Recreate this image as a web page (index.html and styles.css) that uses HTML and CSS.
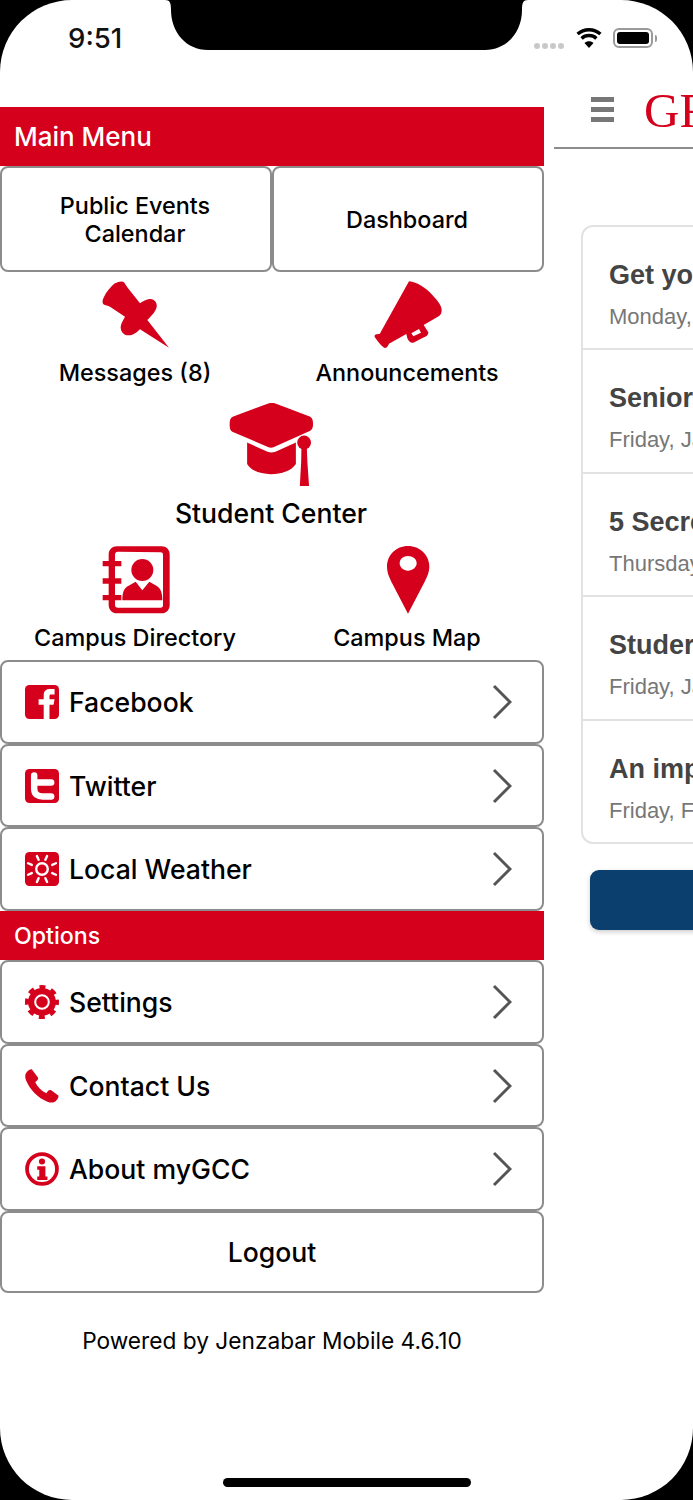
FILE: index.html
```html
<!DOCTYPE html>
<html lang="en">
<head>
<meta charset="utf-8">
<title>myGCC</title>
<link rel="stylesheet" href="styles.css">
</head>
<body>
<div class="screen">
  <div class="app">
    <nav class="menu">
      <h2 class="bar bar-main">Main Menu</h2>
      <div class="btn-row">
        <a class="btn">Public Events<br>Calendar</a>
        <a class="btn">Dashboard</a>
      </div>
      <div class="tiles tiles-first">
        <div class="tile">
          <svg class="ic68" viewBox="126 18 204 204"><path class="r" d="M165 25C175 19 188 17 192 22L203 38L240 85C250 78 262 70 272 72C285 74 292 85 290 95C288 108 275 122 262 135L327 218L240 163C230 172 220 182 205 181C190 180 182 170 182 155C183 145 190 135 195 125L150 95C145 92 135 92 130 88C125 82 128 72 135 60C142 48 155 32 165 25Z"/></svg>
          <span class="tile-label">Messages (8)</span>
        </div>
        <div class="tile">
          <svg class="ic68" viewBox="940 18 204 204"><path class="r" fill-rule="evenodd" d="M1045 19C1070 22 1095 38 1115 60C1132 78 1143 92 1143 106C1143 114 1140 120 1134 124L1089 150L1103 172C1103 180 1098 184 1090 187L1058 203C1050 205 1045 200 1040 190L1037 177L985 206C982 214 977 219 973 219C965 216 950 198 942 186C940 180 945 176 957 177ZM1052 175L1058 184L1081 173L1075 162Z"/></svg>
          <span class="tile-label">Announcements</span>
        </div>
      </div>
      <div class="tile tile-big">
        <svg class="ic84" viewBox="505 385 255 255">
          <path class="r" d="M622 387C630 384 640 384 648 387L748 425C758 430 760 435 760 450C760 460 757 466 750 470L640 519C635 521 630 521 625 519L515 472C508 468 507 462 507 450C507 435 510 430 518 426Z"/>
          <path class="r" d="M560 505L622 533C630 536 638 536 646 533L708 505L708 570C695 590 665 601 632 601C600 601 572 590 560 570Z"/>
          <circle class="r" cx="733" cy="505" r="21"/>
          <path class="r" d="M725 515H741L743 565L748 637H720L724 565Z"/>
        </svg>
        <span class="tile-label-big">Student Center</span>
      </div>
      <div class="tiles tiles-last">
        <div class="tile">
          <svg class="ic68" viewBox="125 33 204 204">
            <path class="r" fill-rule="evenodd" d="M170 34H304C318 34 328 44 328 58V210C328 224 318 235 304 235H170C156 235 145 224 145 210V196H127V180H145V146H127V130H145V94H127V78H145V58C145 44 156 34 170 34ZM173 50C166 50 164 54 164 60V78H183V94H164V130H183V146H164V180H183V196H164V210C164 216 167 218 173 218H300C306 218 308 216 308 210V60C308 54 306 52 300 52Z"/>
            <circle class="r" cx="246" cy="105" r="33"/>
            <path class="r" d="M186 196C186 170 192 158 205 152L226 140L246 166L267 140L288 152C300 158 306 172 306 196Z"/>
          </svg>
          <span class="tile-label">Campus Directory</span>
        </div>
        <div class="tile">
          <svg class="ic68" viewBox="940 33 204 204"><path class="r" fill-rule="evenodd" d="M1042 33C1078 33 1106 60 1106 95C1106 110 1100 124 1092 140L1042 236L992 140C984 124 979 110 979 95C979 60 1006 33 1042 33ZM1042 63C1028 63 1017 72 1017 85C1017 97 1028 107 1042 107C1056 107 1068 97 1068 85C1068 72 1056 63 1042 63Z"/></svg>
          <span class="tile-label">Campus Map</span>
        </div>
      </div>
      <a class="row">
        <svg class="ic34" viewBox="0 0 100 100"><rect class="r" width="100" height="100" rx="13"/><path class="w" d="M55 100V58H40V42H55V30C55 15 65 12 75 12H87V28H77C73 28 72 30 72 33V42H87L84 58H72V100Z"/></svg>
        <span class="row-text">Facebook</span>
        <svg class="chev" viewBox="0 0 20 36"><path d="M2 2L18 18L2 34"/></svg>
      </a>
      <a class="row">
        <svg class="ic34" viewBox="0 0 100 100"><rect class="r" width="100" height="100" rx="13"/><path class="ws" d="M27 19V58C27 75 38 81 52 81H77M27 40H77"/></svg>
        <span class="row-text">Twitter</span>
        <svg class="chev" viewBox="0 0 20 36"><path d="M2 2L18 18L2 34"/></svg>
      </a>
      <a class="row">
        <svg class="ic34" viewBox="0 0 100 100"><rect class="r" width="100" height="100" rx="13"/><circle class="wt" cx="50" cy="50" r="17"/><path class="wr" d="M35 12L40 23M65 12L60 23M9 33L20 38M91 33L80 38M9 67L20 62M91 67L80 62M35 88L40 77M65 88L60 77"/></svg>
        <span class="row-text">Local Weather</span>
        <svg class="chev" viewBox="0 0 20 36"><path d="M2 2L18 18L2 34"/></svg>
      </a>
      <h2 class="bar bar-options">Options</h2>
      <a class="row">
        <svg class="ic34" viewBox="0 0 100 100"><circle class="r" cx="50" cy="50" r="41"/><circle class="teeth" cx="50" cy="50" r="44"/><circle class="ring" cx="50" cy="50" r="20"/></svg>
        <span class="row-text">Settings</span>
        <svg class="chev" viewBox="0 0 20 36"><path d="M2 2L18 18L2 34"/></svg>
      </a>
      <a class="row">
        <svg class="ic34" viewBox="0 0 100 100"><path class="r" d="M20 1L38 25C40 29 38 33 30 38C36 52 48 64 63 71C68 63 71 60 76 62L98 78C100 82 96 90 90 95C84 100 76 100 66 96C38 85 15 62 3 33C-1 22 0 14 6 8C10 4 16 0 20 1Z"/></svg>
        <span class="row-text">Contact Us</span>
        <svg class="chev" viewBox="0 0 20 36"><path d="M2 2L18 18L2 34"/></svg>
      </a>
      <a class="row">
        <svg class="ic34" viewBox="0 0 100 100"><circle class="info" cx="50" cy="50" r="44"/><circle class="r" cx="50" cy="28" r="9"/><path class="r" d="M36 42H60V72H66V82H36V72H42V52H36Z"/></svg>
        <span class="row-text">About myGCC</span>
        <svg class="chev" viewBox="0 0 20 36"><path d="M2 2L18 18L2 34"/></svg>
      </a>
      <a class="row row-center">Logout</a>
      <p class="powered">Powered by Jenzabar Mobile 4.6.10</p>
    </nav>
    <section class="news">
      <header class="news-head">
        <div class="burger"><i></i><i></i><i></i></div>
        <span class="logo">GR</span>
      </header>
      <ul class="card">
        <li class="item"><b>Get yo</b><span>Monday,</span></li>
        <li class="item"><b>Senior</b><span>Friday, Ja</span></li>
        <li class="item"><b>5 Secre</b><span>Thursday</span></li>
        <li class="item"><b>Studer</b><span>Friday, Ja</span></li>
        <li class="item"><b>An imp</b><span>Friday, F</span></li>
      </ul>
      <div class="more"></div>
    </section>
  </div>
  <div class="status">
    <span class="time">9:51</span>
    <svg class="notch" viewBox="0 0 363 51"><path d="M0 0H363C358 0 357 3 357 10C357 32 342 50 320 50H43C21 50 6 32 6 10C6 3 5 0 0 0Z"/></svg>
    <div class="sys">
      <div class="dots"><i></i><i></i><i></i><i></i></div>
      <svg class="wifi" viewBox="0 0 26 20"><path d="M13 20L8.5 15C11 12.8 15 12.8 17.5 15Z"/><path class="wf" d="M5.6 10.4C9.6 6.6 16.4 6.6 20.4 10.4M1.6 6C8 .3 18 .3 24.4 6"/></svg>
      <div class="batt"><i></i></div>
      <div class="nub"></div>
    </div>
  </div>
  <div class="home"></div>
</div>
</body>
</html>
```
FILE: styles.css
```css
* { box-sizing: border-box; }
html, body { margin: 0; padding: 0; background: #000; }
body { width: 693px; height: 1500px; overflow: hidden; font-family: Inter, "Noto Sans", sans-serif; color: #000; }
.screen { position: relative; width: 693px; height: 1500px; background: #fff; border-radius: 72px; overflow: hidden; }
.app { display: flex; gap: 10px; height: 100%; }
.menu { flex: 0 0 544px; padding-top: 107px; display: flex; flex-direction: column; }
.r { fill: #d5001c; }
.w { fill: #fff; }
.bar { flex: none; margin: 0; background: #d5001c; color: #fff; font-weight: 500; display: flex; align-items: center; padding-left: 14px; }
.bar-main { height: 59px; font-size: 26px; }
.bar-options { height: 49px; font-size: 23.2px; }
.btn-row { flex: none; display: flex; height: 106px; }
.btn { flex: 1; border: 2px solid #8c8c8c; border-radius: 8px; display: flex; align-items: center; justify-content: center; text-align: center; font-size: 23.4px; line-height: 28px; font-weight: 500; padding: 2px 2px 0 0; }
.tiles { flex: none; display: flex; }
.tiles-first { margin-top: 9px; }
.tiles-last { margin-top: 15px; }
.tile { flex: 1; display: flex; flex-direction: column; align-items: center; }
.ic68 { width: 68px; height: 68px; display: block; }
.ic84 { width: 84px; height: 84px; display: block; margin-right: 2px; }
.ic34 { width: 34px; height: 34px; flex: none; display: block; overflow: visible; }
.tile-label { margin: 8px 2px 0 0; height: 32px; line-height: 32px; font-size: 23.4px; font-weight: 500; white-space: nowrap; }
.tile-big { flex: none; margin-top: 14px; }
.tile-label-big { margin: 8px 2px 0 0; height: 36px; line-height: 36px; font-size: 26.6px; font-weight: 500; }
.row { flex: none; height: 83.7px; border: 2px solid #8c8c8c; border-radius: 8px; display: flex; align-items: center; padding: 0 30px 0 23px; font-size: 26.6px; font-weight: 500; }
.tiles-last + .row { margin-top: 6px; }
.row-text { margin-left: 10px; flex: 1; }
.row-center { justify-content: center; padding: 0; height: 82px; }
.chev { width: 20px; height: 36px; flex: none; }
.chev path { fill: none; stroke: #555; stroke-width: 3; }
.ws { fill: none; stroke: #fff; stroke-width: 19; stroke-linecap: round; stroke-linejoin: round; }
.wt { fill: none; stroke: #fff; stroke-width: 7; }
.wr { fill: none; stroke: #fff; stroke-width: 7; stroke-linecap: round; }
.teeth { fill: none; stroke: #d5001c; stroke-width: 12; stroke-dasharray: 17.5 17.05; stroke-dashoffset: 8.7; }
.ring { fill: #d5001c; stroke: #fff; stroke-width: 6; }
.info { fill: none; stroke: #d5001c; stroke-width: 11; }
.powered { margin: 33px 0 0; text-align: center; font-size: 22.7px; line-height: 30px; font-weight: 400; }
.news { flex: 1; min-width: 0; overflow: hidden; padding-top: 50px; }
.news-head { height: 99px; border-bottom: 2px solid #8c8c8c; display: flex; align-items: flex-start; padding: 47px 0 0 37px; margin-bottom: 76px; }
.burger { flex: none; width: 23px; display: flex; flex-direction: column; gap: 5px; margin-right: 30px; }
.burger i { display: block; height: 5px; background: #777; }
.logo { font-family: "Liberation Serif", serif; font-size: 49px; line-height: 34px; margin-top: -3px; color: #d5001c; white-space: nowrap; }
.card { list-style: none; margin: 0 0 0 27px; padding: 0; width: 200px; height: 619px; border: 2px solid #e2e2e2; border-radius: 12px; font-family: "Liberation Sans", sans-serif; }
.item { height: 123.4px; padding: 30px 0 0 26px; border-bottom: 2px solid #e2e2e2; white-space: nowrap; }
.item:last-child { border-bottom: 0; }
.item b { display: block; color: #444; font-size: 27px; line-height: 36px; }
.item span { display: block; margin-top: 10px; color: #777; font-size: 22px; line-height: 28px; }
.more { margin: 26px 0 0 36px; width: 200px; height: 60px; border-radius: 9px; background: #0b3f6e; box-shadow: 0 2px 5px rgba(0,0,0,.2); }
.status { position: absolute; top: 0; left: 0; width: 100%; height: 60px; }
.time { position: absolute; left: 68px; top: 21px; font-size: 27.6px; line-height: 34px; font-weight: 500; color: #111; }
.notch { position: absolute; left: 165px; top: 0; width: 363px; height: 51px; fill: #000; }
.sys { position: absolute; left: 534px; top: 26px; display: flex; align-items: center; height: 24px; }
.dots { display: flex; gap: 2px; margin-top: 16px; }
.dots i { width: 6px; height: 6px; border-radius: 50%; background: #c9c9c9; }
.wifi { width: 26px; height: 20px; margin-left: 12px; fill: #000; }
.wf { fill: none; stroke: #000; stroke-width: 3.4; }
.batt { width: 40px; height: 20px; margin-left: 11px; border: 2px solid #9a9a9a; border-radius: 6px; padding: 2px; }
.batt i { display: block; height: 100%; background: #000; border-radius: 3px; }
.nub { width: 2px; height: 7px; margin-left: 2px; background: #9a9a9a; border-radius: 0 2px 2px 0; }
.home { position: absolute; left: 223px; top: 1478px; width: 248px; height: 9px; border-radius: 5px; background: #000; }
```
